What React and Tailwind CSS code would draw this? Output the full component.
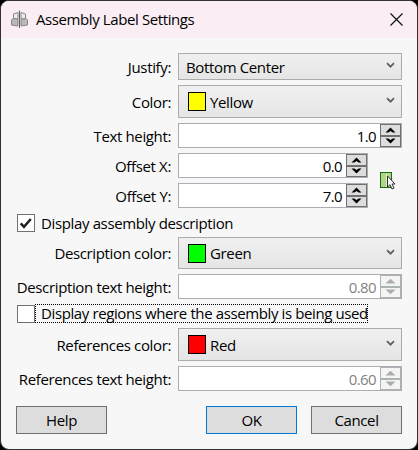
import React from 'react';

function Label({ children }) {
  return (
    <div className="w-[171px] shrink-0 flex justify-end">
      <span className="whitespace-nowrap">{children}</span>
    </div>
  );
}

function Chevron() {
  return (
    <svg className="block shrink-0" width="9" height="7" viewBox="0 0 9 7" fill="none" stroke="#606060" strokeWidth="1.8">
      <path d="M1 1.2L4.5 4.7L8 1.2" />
    </svg>
  );
}

function Select({ children, color, className = '' }) {
  return (
    <div className={`w-[224px] flex items-center border border-[#acacac] bg-linear-to-b from-[#f0f0f0] to-[#e5e5e5] pr-[6px] ${color ? 'pl-[9px]' : 'pl-[7px]'} ${className}`}>
      {color && <span className={`w-[18px] h-[19px] border border-black mr-[4px] ${color}`} />}
      <span className="flex-1 whitespace-nowrap">{children}</span>
      <span className="-mt-[2px]"><Chevron /></span>
    </div>
  );
}

function Arrow({ up, disabled }) {
  return (
    <svg width="11" height="6" viewBox="0 0 11 6" fill={disabled ? '#acacac' : '#000'}>
      {disabled
        ? <path d={up ? 'M0.5 5.5L5.5 0.7L10.5 5.5Z' : 'M0.5 0.5L5.5 5.3L10.5 0.5Z'} />
        : <path d={up ? 'M0.5 5.5L5.5 0.5L10.5 5.5H7.7L5.5 4L3.3 5.5Z' : 'M0.5 0.5L5.5 5.5L10.5 0.5H7.7L5.5 2L3.3 0.5Z'} />}
    </svg>
  );
}

function Spinner({ value, disabled, className = 'w-[224px]' }) {
  const cell = `flex-1 flex items-center justify-center border ${disabled ? 'border-[#adb2b5] bg-[#f4f4f4]' : 'border-[#707070] bg-[#dddddd]'}`;
  return (
    <div className={`h-[25px] flex items-center border border-[#abadb3] bg-white ${className}`}>
      <span className={`flex-1 text-right pr-[4px] tracking-[-0.6px] ${disabled ? 'text-[#838383]' : ''}`}>{value}</span>
      <div className="w-[21px] h-[23px] flex flex-col">
        <div className={cell}><Arrow up disabled={disabled} /></div>
        <div className={cell}><Arrow disabled={disabled} /></div>
      </div>
    </div>
  );
}

function Row({ label, className = '', children }) {
  return (
    <div className={`flex items-center gap-[7px] ${className}`}>
      <Label>{label}</Label>
      {children}
    </div>
  );
}

function Box({ checked }) {
  return (
    <span className="w-[18px] h-[18px] shrink-0 border border-[#707070] bg-white flex items-center justify-center">
      {checked && (
        <svg width="14" height="13" viewBox="0 0 14 13" fill="none" stroke="#212121" strokeWidth="2.5">
          <path d="M1.7 6.3L5 9.8L11.8 2" />
        </svg>
      )}
    </span>
  );
}

function Button({ children, className = 'border-[#707070]' }) {
  return (
    <button className={`w-[91px] h-[28px] border bg-[#dddddd] flex items-center justify-center ${className}`}>{children}</button>
  );
}

export default function App() {
  return (
    <div className="w-[418px] h-[450px] bg-black overflow-hidden font-['Open_Sans','Noto_Sans',sans-serif] text-[15px] leading-[20px] tracking-[-0.36px] text-black">
      <div className="w-[418px] h-[450px] border border-[#333034] rounded-[9px] bg-[#f7f7f7] overflow-hidden flex flex-col">
        <div className="h-[37px] shrink-0 bg-[#faeef4] flex items-center pl-[9px] pr-[14px]">
          <svg width="19" height="19" viewBox="0 0 19 19" stroke="#858585" strokeWidth="1">
            <path d="M3.5 9V4L8 2.5V9Z M15.5 9V4L11 2.5V9Z" fill="#eeeaec" />
            <path d="M1.5 10L3 8.5L8 9.5V16L1.5 15Z M17.5 10L16 8.5L11 9.5V16L17.5 15Z" fill="#b9b9b9" />
            <path d="M9.5 0.5V18" stroke="#606060" />
          </svg>
          <span className="ml-[7px] flex-1 -mt-px tracking-[-0.4px]">Assembly Label Settings</span>
          <svg width="13" height="13" viewBox="0 0 13 13" stroke="#111" strokeWidth="1.2">
            <path d="M0.5 0.5L12.5 12.5M12.5 0.5L0.5 12.5" />
          </svg>
        </div>

        <div className="flex flex-col pt-[15px]">
          <Row label="Justify:" className="-ml-px"><Select className="h-[27px]">Bottom Center</Select></Row>
          <Row label="Color:" className="-ml-px mt-[5px]"><Select className="h-[33px]" color="bg-[#ffff00]">Yellow</Select></Row>
          <Row label="Text height:" className="-ml-px mt-[5px]"><Spinner value="1.0" /></Row>
          <div className="-ml-px mt-[5px] flex items-center">
            <div className="flex flex-col gap-[5px]">
              <Row label="Offset X:"><Spinner value="0.0" className="w-[190px]" /></Row>
              <Row label="Offset Y:"><Spinner value="7.0" className="w-[190px]" /></Row>
            </div>
            <svg className="ml-[12px]" width="16" height="18" viewBox="0 0 16 18">
              <rect x="0.5" y="0.5" width="11" height="15" fill="#b3d48a" stroke="#107010" />
              <path d="M6.5 2V15" stroke="#dcebc8" />
              <path d="M7.5 4V15L10 12.7L12 17L14 16L12 12H15Z" fill="#fff" stroke="#303030" />
            </svg>
          </div>
          <div className="mt-[6px] pl-[16px] h-[18px] flex items-center gap-[6px]">
            <Box checked /><span>Display assembly description</span>
          </div>
          <Row label="Description color:" className="-ml-px mt-[5px]"><Select className="h-[32px]" color="bg-[#00ff00]">Green</Select></Row>
          <Row label="Description text height:" className="-ml-px mt-[5px]"><Spinner value="0.80" disabled /></Row>
          <div className="mt-[5px] pl-[16px] h-[19px] flex items-center">
            <Box />
            <span className="w-[333px] h-[19px] border border-dotted border-black pl-[5px] leading-[17px] tracking-[-0.39px] whitespace-nowrap">Display regions where the assembly is being used</span>
          </div>
          <Row label="References color:" className="-ml-px mt-[5px]"><Select className="h-[33px]" color="bg-[#ff0000]">Red</Select></Row>
          <Row label="References text height:" className="-ml-px mt-[5px]"><Spinner value="0.60" disabled /></Row>
          <div className="mt-[15px] pl-[15px] pr-[15px] flex">
            <Button>Help</Button>
            <div className="ml-auto flex gap-[14px]">
              <Button className="border-[#0078d7]">OK</Button>
              <Button>Cancel</Button>
            </div>
          </div>
        </div>
      </div>
    </div>
  );
}
